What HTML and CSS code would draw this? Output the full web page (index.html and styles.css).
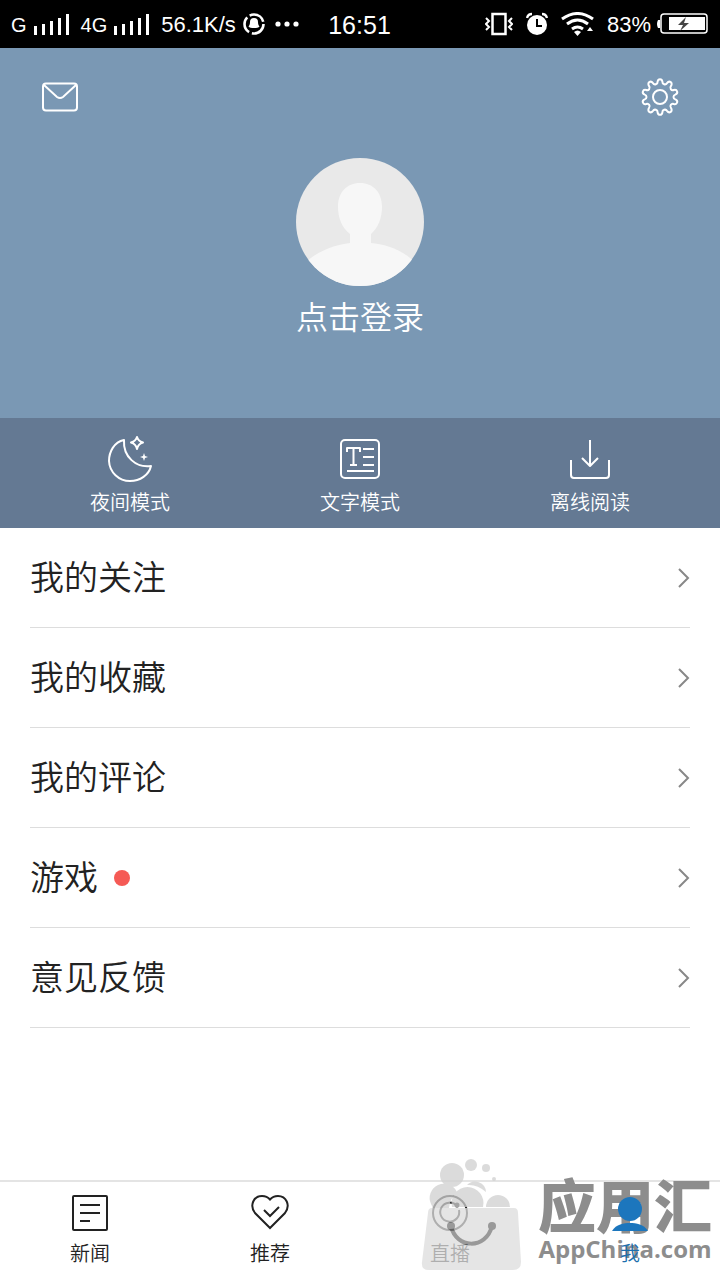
FILE: index.html
```html
<!DOCTYPE html>
<html lang="zh-CN">
<head>
    <meta charset="UTF-8">
    <meta name="viewport" content="width=device-width, initial-scale=1.0">
    <title>我</title>
    <link rel="stylesheet" href="styles.css">
</head>
<body>
    <div class="status-bar">
        <div class="status-left">
            <span class="network">G</span>
            <svg class="signal" width="36" height="24" viewBox="0 0 36 24"><path d="M0 14h3v9H0zM8 12h3v11H8zM16 9h3v14h-3zM24 6h3v17h-3zM32 2h3v21h-3z"/></svg>
            <span class="network">4G</span>
            <svg class="signal" width="36" height="24" viewBox="0 0 36 24"><path d="M0 14h3v9H0zM8 12h3v11H8zM16 9h3v14h-3zM24 6h3v17h-3zM32 2h3v21h-3z"/></svg>
            <span class="speed">56.1K/s</span>
            <svg class="app-icon" width="22" height="24" viewBox="0 0 22 24">
                <circle cx="11" cy="12" r="9.5" fill="none" stroke="#fff" stroke-width="2.6" stroke-dasharray="17 3"/>
                <path d="M11 6a4 4 0 0 1 4 4c0 2 .4 3 1.500 4.500-1.500 2-9.500 2-11 0C6.600 13 7 12 7 10a4 4 0 0 1 4-4z" fill="#fff"/>
            </svg>
            <svg class="dots" width="24" height="24" viewBox="0 0 24 24" fill="#fff"><circle cx="3" cy="12" r="2.600"/><circle cx="12" cy="12" r="2.600"/><circle cx="21" cy="12" r="2.600"/></svg>
        </div>
        <span class="clock">16:51</span>
        <div class="status-right">
            <svg width="28" height="24" viewBox="0 0 28 24" fill="none" stroke="#fff">
                <rect x="7.500" y="2" width="13" height="20" stroke-width="2.500"/>
                <path d="M1 6l3 3-3 3 3 3-3 3M27 6l-3 3 3 3-3 3 3 3" stroke-width="2"/>
            </svg>
            <svg width="22" height="24" viewBox="0 0 22 24">
                <circle cx="11" cy="13" r="10" fill="#fff"/>
                <path d="M1 6q1-4 5-4M21 6q-1-4-5-4" fill="none" stroke="#fff" stroke-width="2.400"/>
                <path d="M11 7v7h5" fill="none" stroke="#000" stroke-width="2"/>
            </svg>
            <svg width="33" height="24" viewBox="0 0 33 24" fill="none" stroke="#fff" stroke-width="3">
                <path d="M1 7q15.500-11 31 0M6 12q10.500-8 21 0M11 17q5.500-4 11 0"/>
                <path d="M13 20q3.500-3 7 0l-3.500 4zM29 15l3 4h-6z" fill="#fff" stroke="none"/>
            </svg>
            <span class="battery-text">83%</span>
            <svg class="battery" width="52" height="24" viewBox="0 0 52 24">
                <path d="M4 8H2q-2 4 0 8h2z" fill="#fff"/>
                <rect x="5" y="2" width="46" height="19" rx="3" fill="none" stroke="#fff" stroke-width="1.500"/>
                <path d="M13 5h36v13H13z" fill="#fff"/>
                <path d="M30 5l-8 8h5l-3 6 9-8h-5z" fill="#444"/>
            </svg>
        </div>
    </div>

    <header class="profile">
        <div class="profile-tools">
            <button class="tool-button" aria-label="消息">
                <svg width="40" height="40" viewBox="0 0 40 40"><rect x="3" y="6.500" width="34" height="27" rx="3"/><path d="M4 8l13 12q3 2 6 0L36 8"/></svg>
            </button>
            <button class="tool-button" aria-label="设置">
                <svg width="40" height="40" viewBox="0 0 40 40">
                    <path d="M17.600 4.700A2.430 3 0 0 1 22.400 4.700A2.500 2.500 0 0 0 27 6.200A2.430 3 36 0 1 31 9A2.500 2.500 0 0 0 33.800 13A2.430 3 72 0 1 35.300 17.600A2.500 2.500 0 0 0 35.300 22.400A2.430 3 108 0 1 33.800 27A2.500 2.500 0 0 0 31 31A2.430 3 144 0 1 27 33.800A2.500 2.500 0 0 0 22.400 35.300A2.430 3 0 0 1 17.600 35.300A2.500 2.500 0 0 0 13 33.800A2.430 3 36 0 1 9 31A2.500 2.500 0 0 0 6.200 27A2.430 3 72 0 1 4.700 22.400A2.500 2.500 0 0 0 4.700 17.600A2.430 3 108 0 1 6.200 13A2.500 2.500 0 0 0 9 9A2.430 3 144 0 1 13 6.200A2.500 2.500 0 0 0 17.600 4.700Z"/>
                    <circle cx="20" cy="20" r="7"/>
                </svg>
            </button>
        </div>
        <button class="login">
            <svg class="avatar" width="128" height="128" viewBox="0 0 128 128">
                <defs><clipPath id="avatarClip"><circle cx="64" cy="64" r="64"/></clipPath></defs>
                <g clip-path="url(#avatarClip)">
                    <rect width="128" height="128" fill="#e9e9e9"/>
                    <path d="M10 104C24 91 44 86 54 85V76C46 70 42 60 42 49C42 34 51 25 64 25S86 34 86 49C86 60 82 70 75 76V85C88 86 108 92 118 104V128H10Z" fill="#f7f7f7"/>
                </g>
            </svg>
            <span>点击登录</span>
        </button>
    </header>

    <div class="modes">
        <button class="mode">
            <svg width="48" height="48" viewBox="0 0 48 48">
                <path d="M18 5C8 7 3 17 3 26A21 21 0 0 0 24 46C34 46 43 40 45 31C30 33 17 22 18 5Z"/>
                <path d="M31 2Q32 6 37 7.500Q32 9 31 14Q30 9 25 7.500Q30 6 31 2Z"/>
                <path d="M38 18l1 3 3 1-3 1-1 3-1-3-3-1 3-1z" class="solid"/>
            </svg>
            <span>夜间模式</span>
        </button>
        <button class="mode">
            <svg width="48" height="48" viewBox="0 0 48 48">
                <rect x="5" y="5" width="38" height="38" rx="4"/>
                <path d="M11 17v-4h13v4M17.500 13v17M14 30h7M27 14h11M27 22h11M27 30h11M11 36h27"/>
            </svg>
            <span>文字模式</span>
        </button>
        <button class="mode">
            <svg width="48" height="48" viewBox="0 0 48 48"><path d="M5 25v15q0 3 3 3h32q3 0 3-3V25M24 5v26M16 23l8 8 8-8"/></svg>
            <span>离线阅读</span>
        </button>
    </div>

    <main class="menu">
        <a href="#" class="menu-item"><span>我的关注</span><svg class="arrow" width="14" height="20" viewBox="0 0 14 20"><path d="M3 1l9 9-9 9"/></svg></a>
        <a href="#" class="menu-item"><span>我的收藏</span><svg class="arrow" width="14" height="20" viewBox="0 0 14 20"><path d="M3 1l9 9-9 9"/></svg></a>
        <a href="#" class="menu-item"><span>我的评论</span><svg class="arrow" width="14" height="20" viewBox="0 0 14 20"><path d="M3 1l9 9-9 9"/></svg></a>
        <a href="#" class="menu-item"><span>游戏</span><i class="red-dot"></i><svg class="arrow" width="14" height="20" viewBox="0 0 14 20"><path d="M3 1l9 9-9 9"/></svg></a>
        <a href="#" class="menu-item"><span>意见反馈</span><svg class="arrow" width="14" height="20" viewBox="0 0 14 20"><path d="M3 1l9 9-9 9"/></svg></a>
    </main>

    <nav class="tabs">
        <a href="#" class="tab">
            <svg width="40" height="40" viewBox="0 0 40 40"><rect x="3" y="3" width="34" height="34" rx="1"/><path d="M10 12h20M10 20h20M10 28h10"/></svg>
            <span>新闻</span>
        </a>
        <a href="#" class="tab">
            <svg width="40" height="40" viewBox="0 0 40 40"><path d="M20 35L5 20C-1 12 4 3 12 3Q17 3 20 6.500Q23 3 28 3C36 3 41 12 35 20Z"/><path d="M14 17l6 6 9-9"/></svg>
            <span>推荐</span>
        </a>
        <a href="#" class="tab">
            <svg width="40" height="40" viewBox="0 0 40 40"><circle cx="20" cy="20" r="17"/><path d="M27 13A9.500 9.500 0 1 0 29 17"/><circle cx="27" cy="12" r="1.500" fill="#222"/></svg>
            <span>直播</span>
        </a>
        <a href="#" class="tab active">
            <svg width="40" height="40" viewBox="0 0 40 40"><circle cx="20" cy="16" r="12"/><path d="M2 38C6 31 14 30 20 30S34 31 38 38Z"/></svg>
            <span>我</span>
        </a>
        <div class="watermark">
            <svg class="bag" width="104" height="116" viewBox="0 0 104 116">
                <g fill="#d0d0d0">
                    <circle cx="32" cy="17" r="12"/><circle cx="51" cy="7" r="6"/><circle cx="66" cy="10" r="4"/><circle cx="74" cy="21" r="2"/>
                    <path d="M47 27A11 11 0 0 1 66 34Q57 26 47 27Z"/>
                    <path d="M11 46A14 14 0 1 1 37 34Q30 40 29 50H13Z"/><path d="M32 49A16 16 0 1 1 63 49Z"/><path d="M66 49A12 12 0 1 1 90 49Z"/>
                </g>
                <path d="M12 50H94Q98 50 98 55L101 104Q101 112 93 112H9Q1 112 2 104L8 55Q8 50 12 50Z" fill="#ddd"/>
                <path d="M31 68C36 91 66 92 72 68" fill="none" stroke="#777" stroke-width="4"/>
                <g fill="#777"><circle cx="31" cy="68" r="4"/><circle cx="72" cy="68" r="4"/></g>
            </svg>
            <div class="brand">
                <strong class="brand-name">应用汇</strong>
                <span class="brand-url">AppChina.com</span>
            </div>
        </div>
    </nav>
</body>
</html>
```
FILE: styles.css
```css
* {
    box-sizing: border-box;
}
body {
    margin: 0;
    min-height: 100vh;
    display: flex;
    flex-direction: column;
    background: #fff;
    color: #222;
    font-family: "Liberation Sans", "Noto Sans CJK SC", sans-serif;
    font-weight: 350;
}
button {
    padding: 0;
    border: 0;
    background: none;
    color: inherit;
    font: inherit;
    cursor: pointer;
}
a {
    color: inherit;
    text-decoration: none;
}
svg {
    display: block;
    flex: none;
}

.status-bar {
    display: grid;
    grid-template-columns: 1fr auto 1fr;
    align-items: center;
    height: 48px;
    padding: 0 12px 0 11px;
    background: #000;
    color: #fff;
    font-size: 22px;
    line-height: 28px;
}
.status-left,
.status-right {
    display: flex;
    align-items: center;
}
.status-left {
    gap: 7px;
}
.status-right {
    justify-content: flex-end;
    gap: 13px;
}
.status-bar span {
    padding-top: 2px;
}
.network {
    font-size: 20px;
}
.signal {
    margin-right: 4px;
    fill: #fff;
}
.dots {
    margin-left: 3px;
}
.clock {
    font-size: 25px;
}
.battery {
    margin-left: -8px;
}

.profile {
    height: 370px;
    padding: 29px 40px 0;
    background: #7a98b4;
    color: #fff;
}
.profile-tools {
    display: flex;
    justify-content: space-between;
}
.tool-button svg {
    fill: none;
    stroke: #fff;
    stroke-width: 2;
}
.login {
    display: flex;
    flex-direction: column;
    align-items: center;
    gap: 8px;
    margin: 41px auto 0;
    font-size: 32px;
    line-height: 48px;
}

.modes {
    display: grid;
    grid-template-columns: repeat(3, 1fr);
    height: 110px;
    padding: 0 15px;
    background: #647993;
    color: #fff;
}
.mode {
    display: flex;
    flex-direction: column;
    align-items: center;
    padding-top: 17px;
    font-size: 20px;
    line-height: 28px;
    gap: 6px;
}
.mode svg {
    fill: none;
    stroke: #fff;
    stroke-width: 2;
    stroke-linejoin: round;
}
.mode .solid {
    fill: #fff;
    stroke: none;
}

.menu {
    flex: 1;
    padding: 0 30px;
}
.menu-item {
    display: flex;
    align-items: center;
    height: 100px;
    border-bottom: 1px solid #ddd;
    font-size: 34px;
    line-height: 50px;
}
.red-dot {
    width: 16px;
    height: 16px;
    margin-left: 16px;
    border-radius: 50%;
    background: #f55a55;
}
.arrow {
    margin-left: auto;
    fill: none;
    stroke: #888;
    stroke-width: 2;
}

.tabs {
    position: relative;
    display: grid;
    grid-template-columns: repeat(4, 1fr);
    height: 100px;
    border-top: 2px solid #e4e4e4;
}
.tab {
    display: flex;
    flex-direction: column;
    align-items: center;
    padding-top: 11px;
    font-size: 20px;
    line-height: 28px;
    gap: 7px;
}
.tab svg {
    fill: none;
    stroke: #222;
    stroke-width: 2;
}
.tab.active {
    position: relative;
    z-index: 2;
    color: #1c6fae;
}
.tab.active svg {
    fill: #1c76bd;
    stroke: none;
}

/* store mark laid over the tabs */
.watermark {
    position: absolute;
    right: 8px;
    bottom: 6px;
    display: flex;
    align-items: flex-end;
    gap: 14px;
    pointer-events: none;
}
.bag {
    opacity: 0.75;
}
.brand {
    display: flex;
    flex-direction: column;
    align-items: center;
    padding-bottom: 9px;
    color: #8d8d8d;
    font-weight: 700;
}
.brand-name {
    font-family: "Noto Sans CJK SC", sans-serif;
    font-size: 58px;
    line-height: 60px;
}
.brand-url {
    font-family: "Open Sans", sans-serif;
    font-size: 24px;
    line-height: 32px;
}
```
